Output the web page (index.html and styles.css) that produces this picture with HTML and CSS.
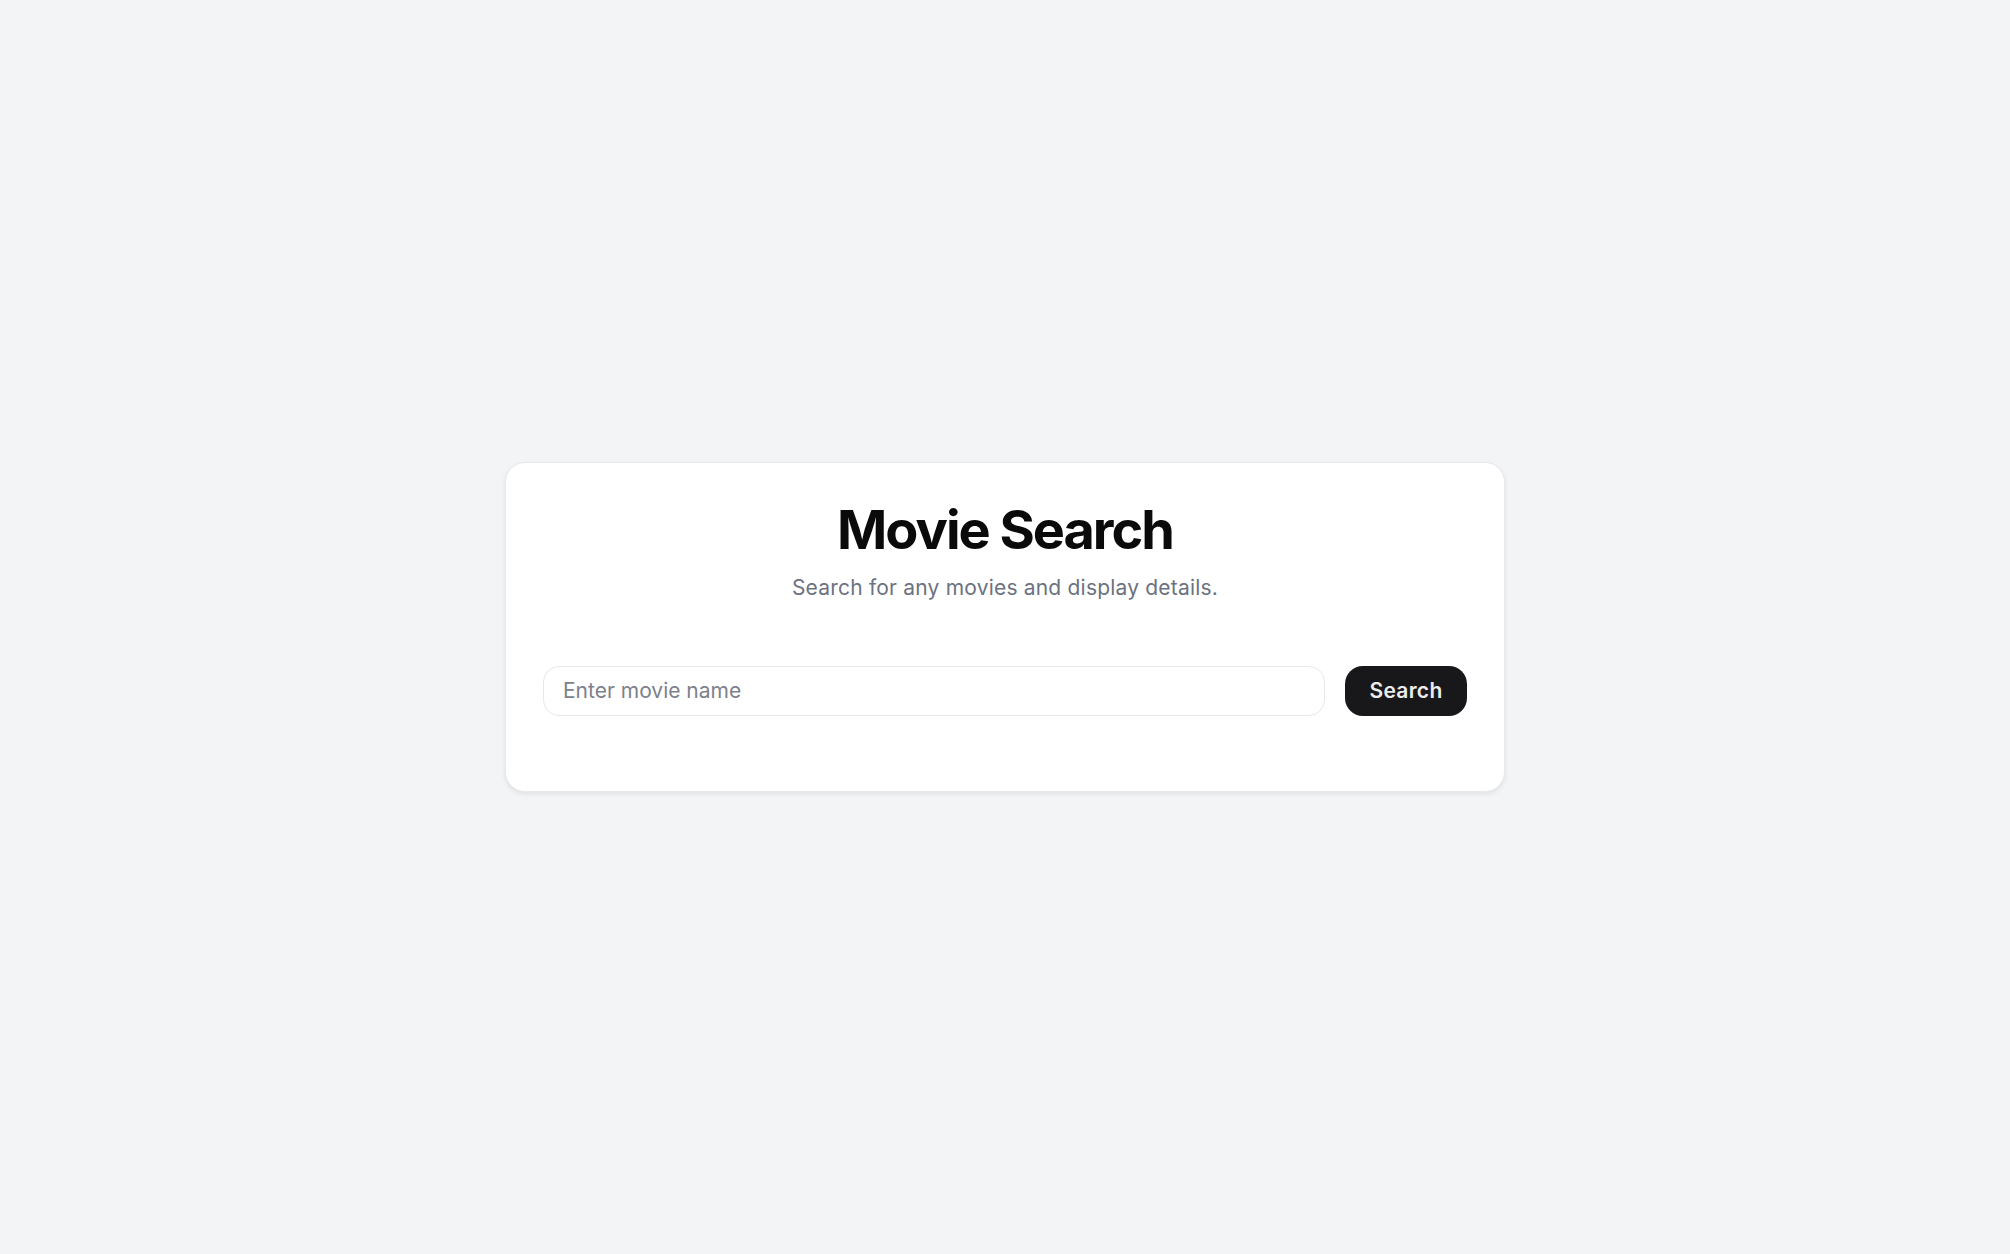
FILE: index.html
```html
<!DOCTYPE html>
<html lang="en">
<head>
<meta charset="utf-8">
<title>Movie Search</title>
<link rel="stylesheet" href="styles.css">
</head>
<body>
<main class="page">
  <section class="card">
    <h1 class="title">Movie Search</h1>
    <p class="subtitle">Search for any movies and display details.</p>
    <form class="search" onsubmit="return false;">
      <input class="search-input" type="text" placeholder="Enter movie name">
      <button class="search-btn" type="submit">Search</button>
    </form>
  </section>
</main>
</body>
</html>
```
FILE: styles.css
```css
* { box-sizing: border-box; }
html, body { margin: 0; padding: 0; height: 100%; }
body {
  background: #f3f4f6;
  font-family: Inter, "Noto Sans", sans-serif;
  color: #111;
}
.page {
  min-height: 100vh;
  display: flex;
  align-items: center;
  justify-content: center;
}
.card {
  width: 1000px;
  background: #fff;
  border: 1px solid #e8e9ec;
  border-radius: 20px;
  box-shadow: 0 2px 5px rgba(0,0,0,0.08);
  padding: 35px 37px 75px;
  text-align: center;
}
.title {
  margin: 0;
  font-size: 54px;
  font-weight: 700;
  letter-spacing: -2px;
  line-height: 1.2;
  color: #0a0a0a;
}
.subtitle {
  margin: 10px 0 0;
  font-size: 21px;
  letter-spacing: 0.2px;
  color: #6b7280;
  line-height: 1.4;
}
.search {
  display: flex;
  gap: 20px;
  margin-top: 63px;
}
.search-input {
  flex: 1;
  height: 50px;
  border: 1px solid #e5e7eb;
  border-radius: 16px;
  padding: 0 19px;
  font-family: inherit;
  font-size: 21px;
  color: #111;
  background: #fff;
  outline: none;
}
.search-input::placeholder { color: #7c818b; }
.search-btn {
  height: 50px;
  width: 122px;
  border: none;
  border-radius: 18px;
  background: #18181b;
  color: #ececec;
  font-family: inherit;
  font-size: 21px;
  font-weight: 600;
  letter-spacing: 0.3px;
  cursor: pointer;
}
```
